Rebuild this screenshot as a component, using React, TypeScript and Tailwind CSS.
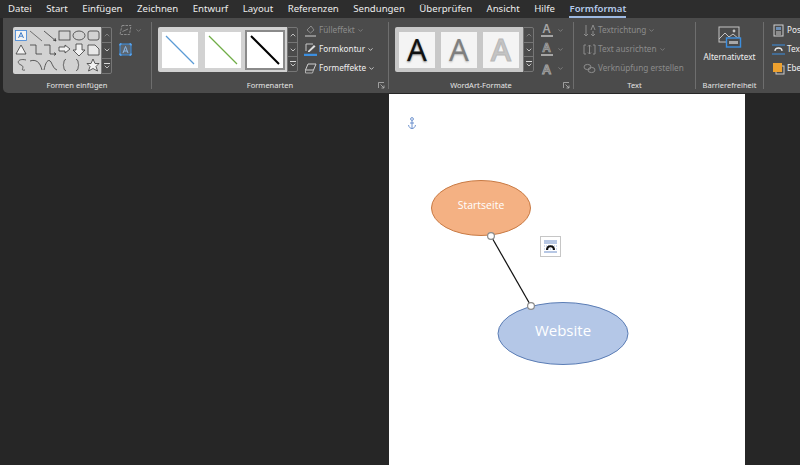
import { ChevronDown, ChevronUp } from "lucide-react";

const menu = ["Datei", "Start", "Einfügen", "Zeichnen", "Entwurf", "Layout", "Referenzen", "Sendungen", "Überprüfen", "Ansicht", "Hilfe"];

const Spinner = ({ activeTop = false }: { activeTop?: boolean }) => (
  <div className="w-[11px] h-full flex flex-col border border-[#767676] rounded-r-[2px] text-[#d8d8d8]">
    <div className={`flex-1 flex items-center justify-center ${activeTop ? "" : "text-[#8a8a8a]"}`}>
      <ChevronUp size={8} strokeWidth={2.5} />
    </div>
    <div className="flex-1 flex items-center justify-center border-y border-[#767676]">
      <ChevronDown size={8} strokeWidth={2.5} />
    </div>
    <div className="flex-1 flex flex-col items-center justify-center">
      <div className="w-[6px] h-px bg-[#d8d8d8] mb-px" />
      <ChevronDown size={8} strokeWidth={2.5} className="-my-[2px]" />
    </div>
  </div>
);

const Caption = ({ children, launcher }: { children: string; launcher?: boolean }) => (
  <div className="h-[15px] relative flex items-center justify-center text-[7.5px] text-[#e6e6e6] whitespace-nowrap">
    {children}
    {launcher && (
      <svg width="7" height="7" viewBox="0 0 7 7" className="absolute right-[3px] top-[4px]" fill="none" stroke="#b5b5b5" strokeWidth="0.8">
        <path d="M0.5 6V0.5H6" />
        <path d="M2.5 2.5L6 6M6 3.5V6H3.5" />
      </svg>
    )}
  </div>
);

const Sep = () => <div className="w-px h-[67px] mt-[4px] bg-[#6e6e6e] shrink-0" />;

// shapes gallery, one svg, 3 rows of 6
const ShapesGallery = () => (
  <svg width="88" height="45" viewBox="0 0 88 45" fill="none" stroke="#3a3a3a" strokeWidth="0.8">
    <rect x="2.5" y="2.5" width="11" height="10" fill="#f4f4f4" stroke="#3b82d6" />
    <path d="M5.5 10L8 4.5L10.5 10M6.5 8.2H9.5" stroke="#2b6fc4" strokeWidth="0.9" />
    <path d="M17 3L29 13" stroke="#555" />
    <path d="M31 3L43 13M43 13L40 12M43 13L42 10" />
    <rect x="46" y="3" width="11" height="9" />
    <ellipse cx="66" cy="7.5" rx="6" ry="4.5" />
    <rect x="75" y="3" width="11" height="9" rx="2" />
    <path d="M3 26L8 17L13 26Z" fill="#f2f2f2" />
    <path d="M17 17H23V26H29" />
    <path d="M31 17H37V26H43M43 26L41 24.5M43 26L41 27.5" />
    <path d="M46 19H52V17L57 21L52 25V23H46Z" fill="#f2f2f2" />
    <path d="M63 16H69V22H72L66 28L60 22H63Z" fill="#f2f2f2" />
    <path d="M75 17H82L86 21V27H75Z" fill="#e8e8e8" />
    <path d="M13 32C5 30 3 35 8 37C13 39 6 43 12 42" stroke="#444" />
    <path d="M17 33C23 31 27 34 29 42" />
    <path d="M31 42C33 32 36 31 38 34C40 38 41 41 44 42" />
    <path d="M53 31.5C50 31.5 51.5 36 50 37C51.5 38 50 42.5 53 42.5" />
    <path d="M63 31.5C66 31.5 64.500 36 66 37C64.500 38 66 42.500 63 42.500" />
    <path d="M80 31L82 35.5H86L83 38.5L84.5 43L80 40.5L75.5 43L77 38.5L74 35.5H78Z" fill="#f2f2f2" />
  </svg>
);

const StyleTile = ({ color, selected }: { color: string; selected?: boolean }) => (
  <div className={`w-[36px] h-[36px] bg-white ${selected ? "outline-2 outline-[#8a8a8a]" : ""}`}>
    <svg width="36" height="36" viewBox="0 0 36 36">
      <path d="M4 4L32 32" stroke={color} strokeWidth={selected ? 2 : 1.3} />
    </svg>
  </div>
);

const WordArtTile = ({ cls }: { cls: string }) => (
  <div className="w-[36px] h-[36px] bg-[#f4f4f4] flex items-center justify-center">
    <span className={`text-[31px] leading-none ${cls}`}>A</span>
  </div>
);

const RibbonBtn = ({ icon, label, off, chevron = true }: { icon: React.ReactNode; label: string; off?: boolean; chevron?: boolean }) => (
  <div className={`h-[19px] flex items-center gap-[2px] text-[8.2px] whitespace-nowrap ${off ? "text-[#8c8c8c]" : "text-[#f0f0f0]"}`}>
    <span className="w-[13px] h-[13px] flex items-center justify-center shrink-0">{icon}</span>
    {label}
    {chevron && <ChevronDown size={7} strokeWidth={2.5} />}
  </div>
);

const WaIcon = ({ cls, bar }: { cls: string; bar?: boolean }) => (
  <div className="h-[19px] flex items-center gap-[4px] text-[#8f8f8f]">
    <div className="w-[13px] flex flex-col items-center leading-none">
      <span className={`text-[12px] leading-[10px] font-semibold ${cls}`}>A</span>
      {bar && <div className="w-[12px] h-[2px] mt-px bg-[#a5a5a5]" />}
    </div>
    <ChevronDown size={7} strokeWidth={2.5} />
  </div>
);

export default function App() {
  return (
    <div className="w-[800px] h-[465px] bg-[#262626] overflow-hidden font-['Noto_Sans',sans-serif]">
      {/* Tabs */}
      <div className="h-[18px] bg-[#2d2d2d] flex items-center pl-[8px] gap-[14.5px] text-[9.6px] text-[#ececec] whitespace-nowrap">
        {menu.map((m) => (
          <span key={m}>{m}</span>
        ))}
        <span className="relative font-semibold text-[#b4c9ea]">
          Formformat
          <span className="absolute left-0 right-0 -bottom-[2px] h-[2px] bg-[#9db8e0]" />
        </span>
      </div>

      {/* Ribbon */}
      <div className="h-[75px] ml-[3px] bg-[#4b4b4b] rounded-bl-[5px] flex overflow-hidden text-[#f0f0f0]">
        {/* Formen einfuegen */}
        <div className="w-[148px] shrink-0 flex flex-col">
          <div className="h-[60px] flex pl-[10px] pt-[9px]">
            <div className="h-[47px] flex">
              <div className="bg-[#d2d2d2] w-[88px] h-[47px] py-px rounded-l-[2px]">
                <ShapesGallery />
              </div>
              <Spinner />
            </div>
            <div className="ml-[7px] flex flex-col gap-[7px] -mt-[3px]">
              <div className="flex items-center gap-[3px]">
                <svg width="13" height="12" viewBox="0 0 13 12" fill="none" stroke="#8c8c8c" strokeWidth="1">
                  <path d="M3 1.5H12L10.5 10.5H1Z" strokeDasharray="2.5 1" />
                  <path d="M3.5 7.5L9 5" />
                </svg>
                <ChevronDown size={7} strokeWidth={2.5} className="text-[#8c8c8c]" />
              </div>
              <svg width="13" height="13" viewBox="0 0 13 13" fill="none">
                <rect x="1" y="1" width="11" height="11" fill="#5c6670" stroke="#3a8de0" />
                <path d="M1 1H2.5M1 1V2.5M12 1H10.5M12 1V2.5M1 12H2.5M1 12V10.5M12 12H10.5M12 12V10.5" stroke="#58a8f5" strokeWidth="1.4" />
                <path d="M4 10L6.5 3.5L9 10M5 8H8" stroke="#8cb8e8" strokeWidth="1" />
              </svg>
            </div>
          </div>
          <Caption>Formen einfügen</Caption>
        </div>
        <Sep />

        {/* Formenarten */}
        <div className="w-[236px] shrink-0 flex flex-col">
          <div className="h-[60px] flex pl-[6px] pt-[9px]">
            <div className="h-[45px] flex">
              <div className="w-[129px] bg-[#d2d2d2] flex items-center justify-between px-[4px] rounded-l-[2px]">
                <StyleTile color="#5b9bd5" />
                <StyleTile color="#70ad47" />
                <StyleTile color="#000000" selected />
              </div>
              <Spinner activeTop />
            </div>
            <div className="ml-[6px] -mt-[6px] flex flex-col">
              <RibbonBtn
                off
                label="Fülleffekt"
                icon={
                  <svg width="13" height="13" viewBox="0 0 13 13" fill="none" stroke="#8c8c8c">
                    <path d="M3 6L7 2L10 6L6.5 9Z" />
                    <path d="M1 12H12" strokeWidth="2" />
                  </svg>
                }
              />
              <RibbonBtn
                label="Formkontur"
                icon={
                  <svg width="13" height="13" viewBox="0 0 13 13" fill="none">
                    <path d="M2 8V1H9" stroke="#c8c8c8" />
                    <path d="M4 8L10 2L11.5 3.5L5.5 9H4Z" fill="#e0e0e0" />
                    <path d="M0 12H13" stroke="#3c8fe0" strokeWidth="2.4" />
                  </svg>
                }
              />
              <RibbonBtn
                label="Formeffekte"
                icon={
                  <svg width="13" height="13" viewBox="0 0 13 13" fill="none" stroke="#d0d0d0">
                    <path d="M4 2H12L9.5 8H1.5Z" />
                    <path d="M1.5 8V11H8.5L9.5 8" stroke="#b0b0b0" />
                  </svg>
                }
              />
            </div>
          </div>
          <Caption launcher>Formenarten</Caption>
        </div>
        <Sep />

        {/* WordArt */}
        <div className="w-[184px] shrink-0 flex flex-col">
          <div className="h-[60px] flex pl-[6px] pt-[9px]">
            <div className="h-[45px] flex">
              <div className="w-[128px] bg-[#c8c8c8] flex items-center justify-between px-[4px] rounded-l-[2px]">
                <WordArtTile cls="text-[#111111] [text-shadow:0_1px_2px_#00000088]" />
                <WordArtTile cls="text-[#7f7f7f] [text-shadow:0_1px_2px_#00000044]" />
                <WordArtTile cls="text-[#c4c4c4] font-medium [-webkit-text-stroke:1px_#b8b8b8]" />
              </div>
              <Spinner />
            </div>
            <div className="ml-[6px] -mt-[6px] flex flex-col">
              <WaIcon bar cls="text-[#a5a5a5]" />
              <WaIcon bar cls="text-[#777777] [-webkit-text-stroke:0.7px_#a5a5a5]" />
              <WaIcon cls="text-[13px] text-[#777777] [-webkit-text-stroke:0.8px_#a5a5a5]" />
            </div>
          </div>
          <Caption launcher>WordArt-Formate</Caption>
        </div>
        <Sep />

        {/* Text */}
        <div className="w-[121px] shrink-0 flex flex-col">
          <div className="h-[60px] pl-[9px] pt-[3px] flex flex-col">
            <RibbonBtn
              off
              label="Textrichtung"
              icon={
                <svg width="13" height="13" viewBox="0 0 13 13" fill="none" stroke="#8c8c8c">
                  <path d="M3 1V12M1 10L3 12L5 10M10 7V12M8 10L10 12L12 10" />
                  <path d="M8 6L10 1L12 6" />
                </svg>
              }
            />
            <RibbonBtn
              off
              label="Text ausrichten"
              icon={
                <svg width="13" height="13" viewBox="0 0 13 13" fill="none" stroke="#8c8c8c">
                  <path d="M3 2H1V11H3M10 2H12V11H10M6.5 2V11M5 3.5L6.5 2L8 3.5M5 9.5L6.5 11L8 9.5" />
                </svg>
              }
            />
            <RibbonBtn
              off
              chevron={false}
              label="Verknüpfung erstellen"
              icon={
                <svg width="13" height="13" viewBox="0 0 13 13" fill="none" stroke="#8c8c8c">
                  <ellipse cx="4.5" cy="5" rx="3.5" ry="2.6" />
                  <ellipse cx="8.5" cy="8" rx="3.5" ry="2.6" />
                </svg>
              }
            />
          </div>
          <Caption>Text</Caption>
        </div>
        <Sep />

        {/* Barrierefreiheit */}
        <div className="w-[67px] shrink-0 flex flex-col">
          <div className="h-[60px] flex flex-col items-center pt-[8px]">
            <svg width="24" height="22" viewBox="0 0 24 22" fill="none">
              <rect x="1" y="1" width="20" height="15" stroke="#c4c4c4" />
              <path d="M1 13L7 7L11 11L15 8L21 13" stroke="#c4c4c4" />
              <circle cx="16" cy="5" r="1.4" fill="#c4c4c4" />
              <rect x="8.5" y="12" width="14" height="9" fill="#4b4b4b" stroke="#3c8fe0" strokeWidth="1.4" />
              <rect x="11" y="15" width="9" height="3" fill="#a8a8a8" />
            </svg>
            <span className="text-[8.2px] mt-[3px] whitespace-nowrap">Alternativtext</span>
          </div>
          <Caption>Barrierefreiheit</Caption>
        </div>
        <Sep />

        {/* Anordnen */}
        <div className="flex flex-col pl-[8px] pt-[3px] shrink-0">
          <RibbonBtn
            chevron={false}
            label="Position"
            icon={
              <svg width="13" height="13" viewBox="0 0 13 13" fill="none" stroke="#d0d0d0">
                <rect x="2" y="1" width="9" height="11" />
                <rect x="4" y="3" width="5" height="3" fill="#6d8fb5" stroke="none" />
                <path d="M4 8H9M4 10H9" />
              </svg>
            }
          />
          <RibbonBtn
            chevron={false}
            label="Textumbruch"
            icon={
              <svg width="13" height="13" viewBox="0 0 13 13" fill="none">
                <path d="M0 2H13M0 11H13" stroke="#3c8fe0" />
                <path d="M3 8C3 4 10 4 10 8" stroke="#e8e8e8" strokeWidth="1.3" />
              </svg>
            }
          />
          <RibbonBtn
            chevron={false}
            label="Ebene"
            icon={
              <svg width="13" height="13" viewBox="0 0 13 13" fill="none">
                <rect x="4" y="4" width="8" height="8" stroke="#c8c8c8" />
                <rect x="1" y="1" width="9" height="9" fill="#eda12f" />
              </svg>
            }
          />
        </div>
      </div>

      {/* Page */}
      <div className="relative ml-[389px] mt-px w-[356px] h-[400px] bg-white">
        <svg width="356" height="371" viewBox="0 0 356 371" fill="none" className="absolute left-0 top-0">
          {/* anchor */}
          <g stroke="#5f87c8" strokeWidth="0.9">
            <circle cx="23" cy="25" r="1.4" />
            <path d="M23 26.5V34.5M21 29H25M19.5 31C20 33.5 21.5 34.5 23 34.5C24.5 34.5 26 33.5 26.5 31" />
          </g>
          <ellipse cx="92" cy="114" rx="49.5" ry="27.5" fill="#f4b183" stroke="#c87a44" />
          <ellipse cx="174" cy="239.5" rx="65" ry="31" fill="#b4c7e7" stroke="#5b7db5" />
          <path d="M102 142L142 212" stroke="#111111" strokeWidth="1.2" />
          <circle cx="102" cy="142" r="3.4" fill="#ffffff" stroke="#8a8a8a" strokeWidth="1.2" />
          <circle cx="142" cy="212" r="3.4" fill="#ffffff" stroke="#8a8a8a" strokeWidth="1.2" />
        </svg>
        <span className="absolute left-[42px] top-[103px] w-[100px] text-center text-[10.5px] leading-[17px] text-white font-['Open_Sans']">
          Startseite
        </span>
        <span className="absolute left-[109px] top-[225px] w-[130px] text-center text-[15px] leading-[22px] text-white font-['Open_Sans']">
          Website
        </span>
        {/* layout options button */}
        <div className="absolute left-[151px] top-[142px] w-[21px] h-[21px] bg-white border border-[#c6c6c6] flex items-center justify-center">
          <svg width="15" height="15" viewBox="0 0 15 15" fill="none">
            <path d="M1 2H14M1 4H14M1 13H14" stroke="#6f8fc9" />
            <path d="M1 7H14M1 10H14" stroke="#9db3dc" strokeDasharray="1 1" />
            <path d="M4 11C4 6 11 6 11 11" stroke="#111111" strokeWidth="2" />
          </svg>
        </div>
      </div>
    </div>
  );
}
